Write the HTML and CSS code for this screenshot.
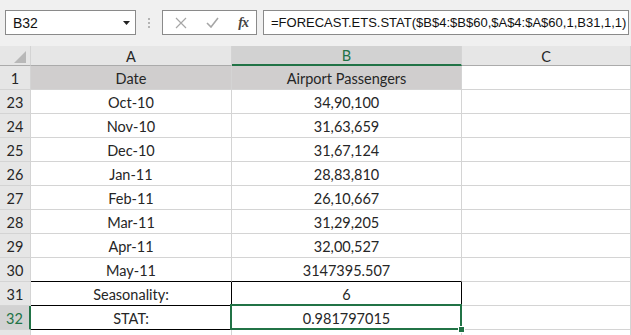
FILE: index.html
```html
<!DOCTYPE html>
<html lang="en">

<head>
    <meta charset="UTF-8">
    <title>Forecast ETS Stat</title>
    <link rel="stylesheet" href="styles.css">
</head>

<body>
    <header class="toolbar">
        <div class="namebox">
            <span>B32</span>
            <svg class="arrow" width="7" height="4" viewBox="0 0 7 4"><path d="M0 0h7L3.5 4z" fill="#222"/></svg>
        </div>
        <div class="dots"><i></i><i></i><i></i></div>
        <div class="buttons">
            <svg width="12" height="12" viewBox="0 0 12 12"><path d="M1 1l10 10M11 1L1 11" stroke="#a6a6a6" stroke-width="1.2"/></svg>
            <svg width="13" height="11" viewBox="0 0 13 11"><path d="M1 6l4 4 7-9" stroke="#a6a6a6" stroke-width="1.6" fill="none"/></svg>
            <span class="fx">fx</span>
        </div>
        <div class="formula">=FORECAST.ETS.STAT($B$4:$B$60,$A$4:$A$60,1,B31,1,1)</div>
    </header>

    <section class="sheet">
        <div class="corner"><span></span></div>
        <div class="colhead">A</div>
        <div class="colhead sel">B</div>
        <div class="colhead">C</div>

        <div class="rowhead">1</div>
        <div class="cell title">Date</div>
        <div class="cell title">Airport Passengers</div>
        <div class="cell"></div>

        <div class="rowhead">23</div><div class="cell">Oct-10</div><div class="cell">34,90,100</div><div class="cell"></div>
        <div class="rowhead">24</div><div class="cell">Nov-10</div><div class="cell">31,63,659</div><div class="cell"></div>
        <div class="rowhead">25</div><div class="cell">Dec-10</div><div class="cell">31,67,124</div><div class="cell"></div>
        <div class="rowhead">26</div><div class="cell">Jan-11</div><div class="cell">28,83,810</div><div class="cell"></div>
        <div class="rowhead">27</div><div class="cell">Feb-11</div><div class="cell">26,10,667</div><div class="cell"></div>
        <div class="rowhead">28</div><div class="cell">Mar-11</div><div class="cell">31,29,205</div><div class="cell"></div>
        <div class="rowhead">29</div><div class="cell">Apr-11</div><div class="cell">32,00,527</div><div class="cell"></div>
        <div class="rowhead">30</div><div class="cell edge-b">May-11</div><div class="cell edge-b">3147395.507</div><div class="cell"></div>
        <div class="rowhead">31</div><div class="cell edge-b edge-r">Seasonality:</div><div class="cell edge-b edge-r">6</div><div class="cell"></div>
        <div class="rowhead sel">32</div><div class="cell edge-b">STAT:</div><div class="cell active">0.981797015<span class="handle"></span></div><div class="cell"></div>
        <div class="rowhead"></div><div class="cell"></div><div class="cell"></div><div class="cell"></div>
    </section>
</body>

</html>
```

FILE: styles.css
```css
body {
    margin: 0;
    width: 631px;
    height: 335px;
    overflow: hidden;
    background: white;
    font-family: "Lato", "Liberation Sans", sans-serif;
}

.toolbar {
    height: 46px;
    background-color: #f0f0f0;
    display: flex;
    align-items: flex-start;
    padding: 10px 0 0 5px;
    box-sizing: border-box;
}

.namebox {
    width: 131px;
    height: 25px;
    box-sizing: border-box;
    border: 1px solid #8a8a8a;
    background: white;
    display: flex;
    align-items: center;
    justify-content: space-between;
    padding: 0 5px 0 7px;
    font-family: "Liberation Sans", sans-serif;
    font-size: 14px;
    color: #111;
}

.arrow {
    margin-top: 1px;
}

.dots {
    width: 26px;
    height: 25px;
    display: flex;
    flex-direction: column;
    align-items: center;
    justify-content: center;
    gap: 2px;
}

.dots i {
    width: 2px;
    height: 2px;
    background: #b4b4b4;
}

.buttons {
    width: 95px;
    height: 25px;
    box-sizing: border-box;
    border: 1px solid #8a8a8a;
    background: white;
    display: flex;
    align-items: center;
    justify-content: space-between;
    padding: 0 8px 0 12px;
}

.fx {
    font-family: "Liberation Serif", serif;
    font-style: italic;
    font-weight: bold;
    font-size: 14px;
    color: #444;
    letter-spacing: -1px;
}

.formula {
    margin-left: 6px;
    width: 366px;
    height: 25px;
    box-sizing: border-box;
    border: 1px solid #8a8a8a;
    background: white;
    padding: 0 0 0 7px;
    font-family: "Liberation Sans", sans-serif;
    font-size: 13px;
    line-height: 23px;
    color: #111;
    white-space: nowrap;
    overflow: hidden;
}

.sheet {
    display: grid;
    grid-template-columns: 31px 201px 230px 1fr;
    grid-template-rows: 20px;
    grid-auto-rows: 24px;
    font-size: 14.5px;
    color: #262626;
}

.sheet > div {
    box-sizing: border-box;
    border-right: 1px solid #d4d4d4;
    border-bottom: 1px solid #d4d4d4;
    display: flex;
    align-items: center;
    justify-content: center;
}

.corner {
    background: #e6e6e6;
    position: relative;
    border-bottom-color: #ababab !important;
}

.corner span {
    position: absolute;
    right: 4px;
    bottom: 2px;
    width: 0;
    height: 0;
    border-left: 12px solid transparent;
    border-bottom: 12px solid #b8b8b8;
}

.colhead {
    background: #e6e6e6;
    border-bottom-color: #ababab !important;
    padding-top: 1px;
}

.colhead.sel {
    background: #d2d2d2;
    color: #217346;
    border-bottom: 2px solid #217346 !important;
}

.rowhead {
    background: #e6e6e6;
    padding-top: 2px;
}

.rowhead.sel {
    background: #d2d2d2;
    color: #217346;
    border-right: 2px solid #217346 !important;
}

.cell {
    padding-top: 2px;
}

.title {
    background: #d0cece;
}

.edge-b {
    border-bottom-color: #000 !important;
}

.edge-r {
    border-right-color: #000 !important;
}

.active {
    position: relative;
}

.active::after {
    content: "";
    position: absolute;
    left: -2px;
    top: -2px;
    right: -1px;
    bottom: -1px;
    border: 2px solid #217346;
}

.handle {
    position: absolute;
    right: -4px;
    bottom: -4px;
    width: 5px;
    height: 5px;
    background: #217346;
    border: 1px solid white;
    z-index: 2;
}
```
